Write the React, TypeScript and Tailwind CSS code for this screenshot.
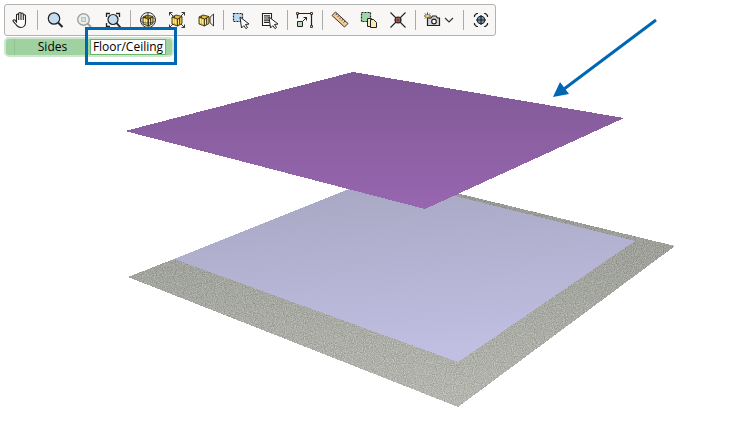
import type { ReactNode } from "react";

/** Shared 20x20 frame for the toolbar drawings. */
function Icon({ children, faded }: { children: ReactNode; faded?: boolean }) {
  return (
    <svg viewBox="0 0 20 20" className={faded ? "size-5 shrink-0 opacity-40" : "size-5 shrink-0"} fill="none" stroke="#222" aria-hidden="true">
      {children}
    </svg>
  );
}

function Tool({ label, disabled, children }: { label: string; disabled?: boolean; children: ReactNode }) {
  return (
    <button type="button" aria-label={label} title={label} disabled={disabled} className="grid h-[30px] w-[29px] shrink-0 place-items-center hover:bg-black/5">
      {children}
    </button>
  );
}

function Separator() {
  return <span className="mr-[2px] ml-[3px] h-5 w-px shrink-0 bg-[#aaaaaa]" />;
}

/** Yellow box model used by the three view tools. */
function Box() {
  return (
    <g stroke="#35301c" strokeWidth="0.9">
      <path d="M5 7 9 5l6 1.5v7L10.5 16 5 14z" fill="#e3bd45" />
      <path d="m5 7 5.5 2L15 6.5M10.5 9v7M7.5 6v2M12.5 8v6.500" />
      <path d="M6.5 9v4M8.5 9.5v4M11.5 10v4" stroke="#fff08e" strokeWidth="1.1" />
    </g>
  );
}

function Cursor() {
  return <path d="m9 7 9 7-3.5.5 2 3-1.5 1.2-2.2-3L10.5 18z" fill="#fff" />;
}

function Toolbar() {
  return (
    <div role="toolbar" aria-label="View tools" className="flex w-fit items-center rounded-[3px] border border-[#b2b2b2] bg-[#f8f7f6]">
      <Tool label="Pan">
        <Icon>
          <path d="M6.5 12V5.2a1.1 1.1 0 0 1 2.2 0V10 3.6a1.1 1.1 0 0 1 2.3 0V10 4.2a1.1 1.1 0 0 1 2.3 0V10 5.8a1.1 1.1 0 0 1 2.2 0v6.7c0 2.500-1.700 5-4.700 5-2.300 0-3.500-1-4.800-3l-2.800-3.200c-.8-1.200.8-2.100 1.800-1.100z" fill="#fff" strokeWidth="1.1" />
        </Icon>
      </Tool>
      <Separator />
      <Tool label="Zoom">
        <Icon>
          <circle cx="9" cy="8.5" r="5.7" fill="#c2dcf0" strokeWidth="1.2" />
          <path d="m13.2 12.7 4.3 4.3" strokeWidth="2" />
        </Icon>
      </Tool>
      <Tool label="Zoom selection" disabled>
        <Icon faded>
          <circle cx="9.5" cy="9.5" r="5.8" fill="#dde8ee" strokeWidth="1.4" />
          <path d="m13.5 13.5 3.5 3.5" strokeWidth="2" />
          <path d="M7.5 7.5h4v4h-4z" fill="#9ccb9c" stroke="#507050" />
        </Icon>
      </Tool>
      <Tool label="Zoom to fit">
        <Icon>
          <circle cx="10" cy="9.5" r="5" fill="#c2dcf0" strokeWidth="1.2" />
          <path d="m13.6 13.2 3.9 4.3" strokeWidth="1.8" />
          <path d="M3.5 7V3.5H7M13 3.5h3.5V7M3.5 13v3.5H7" strokeWidth="1.3" />
        </Icon>
      </Tool>
      <Separator />
      <Tool label="Orbit">
        <Icon>
          <Box />
          <circle cx="10" cy="10" r="7.5" strokeWidth="0.9" />
          <ellipse cx="10" cy="10" rx="7.5" ry="3" strokeWidth="0.6" />
          <path d="M10 2.5v15" strokeWidth="0.7" />
        </Icon>
      </Tool>
      <Tool label="Extents">
        <Icon>
          <Box />
          <path d="M2.5 5.5v-3h3m-3 0L6 6M14.5 2.5h3v3m0-3L14 6M2.5 14.5v3h3m-3 0L6 14M17.5 14.5v3h-3m3 0L14 14" strokeWidth="0.9" />
        </Icon>
      </Tool>
      <Tool label="Side view">
        <Icon>
          <g transform="translate(-2 0)">
            <Box />
          </g>
          <path d="M17.5 4v12L14 12.7V7.3z" fill="#eee" strokeWidth="0.9" />
        </Icon>
      </Tool>
      <Separator />
      <Tool label="Select area">
        <Icon>
          <path d="M2.5 3.5h9v8h-9z" fill="#bcd8ee" strokeWidth="1.2" strokeDasharray="2 1" />
          <Cursor />
        </Icon>
      </Tool>
      <Tool label="Select from list">
        <Icon>
          <path d="M2.5 3.5h9v12h-9z" fill="#fff" strokeWidth="1.1" />
          <path d="M4 5.8h6M4 8h6M4 10.2h5M4 12.4h5" strokeWidth="1.2" />
          <Cursor />
        </Icon>
      </Tool>
      <Separator />
      <Tool label="Scale">
        <Icon>
          <path d="M2.5 3.5h14v13M2.5 3.5v5" strokeWidth="1.2" />
          <path d="M2.5 11.5h5v5h-5z" fill="#b4dfbd" />
          <path d="m8 11 3.5-3.5M8.5 7.5h3v3" />
          <path d="M1.5 2.5h2v2h-2zM15.5 2.5h2v2h-2zM15.5 15.5h2v2h-2z" fill="#e8dc50" strokeWidth="0.8" />
        </Icon>
      </Tool>
      <Separator />
      <Tool label="Measure">
        <Icon>
          <path d="m2 5.5 3.5-3.5L18 13.5 14.5 17z" fill="#f4c996" strokeWidth="0.9" />
          <path d="M7.200 3.600 5.700 5.100M9.200 5.400 7.700 6.900M11.200 7.300 9.700 8.800M13.200 9.100l-1.500 1.500M15.200 11l-1.500 1.500" strokeWidth="0.9" />
        </Icon>
      </Tool>
      <Tool label="Copy and paste">
        <Icon>
          <path d="M2.5 2.5h9v9h-9z" fill="#9fd5ac" strokeWidth="1.2" strokeDasharray="2 1" />
          <path d="M8.5 8.5h4l2 2v6h-6z" fill="#f7e9b8" />
          <path d="M11.5 9.5h3l3 3v5h-6z" fill="#f7e9b8" />
        </Icon>
      </Tool>
      <Tool label="Clear marker">
        <Icon>
          <path d="m2.5 2.5 15 15m0-15-15 15" strokeWidth="1.1" />
          <circle cx="10" cy="10" r="3" fill="#c96856" strokeWidth="1.2" />
          <path d="M10 7v6M7 10h6" strokeWidth="0.6" />
        </Icon>
      </Tool>
      <Separator />
      <button type="button" aria-label="Camera" aria-haspopup="menu" className="flex h-[30px] w-[42px] items-center gap-[2px] pl-1 hover:bg-black/5">
        <Icon>
          <path d="M5.5 8H9l1.500-2h3.500l1.500 2h2v7.500h-12z" fill="#d4d4d4" strokeWidth="1.2" />
          <circle cx="12" cy="11.500" r="2.300" fill="#fff" strokeWidth="1.2" />
          <path d="M5.5 2.500v7M2 6h7M3 3.500l5 5m0-5-5 5" strokeWidth="0.9" />
          <circle cx="5.5" cy="6" r="1.6" fill="#f1cf65" stroke="none" />
        </Icon>
        <svg viewBox="0 0 10 10" className="size-[10px] shrink-0" fill="none" stroke="#333" strokeWidth="1.2" aria-hidden="true">
          <path d="m1 3 4 4 4-4" />
        </svg>
      </button>
      <Separator />
      <Tool label="Center view">
        <Icon>
          <path d="M3.5 7V5.500l2-2H7M13 3.500h1.500l2 2V7M3.500 13v1.500l2 2H7M13 16.500h1.500l2-2V13" strokeWidth="1.2" />
          <circle cx="10" cy="10" r="3.800" fill="#7195b2" strokeWidth="1.1" />
          <path d="M10 5v10M5 10h10" strokeWidth="1.1" />
        </Icon>
      </Tool>
    </div>
  );
}

function Tabs() {
  return (
    <div role="tablist" aria-label="Surfaces" className="mt-px flex h-5 w-fit items-stretch rounded-[5px] border-2 border-[#cde7cd] bg-[#a0d1a0] pr-1.5 pl-2 text-[12px] leading-4 text-black">
      <button type="button" role="tab" aria-selected="false" className="w-[76px] border-l border-[#8fc391]">
        Sides
      </button>
      <div className="relative flex">
        <button type="button" role="tab" aria-selected="true" className="w-[76px] border border-[#69b56e] bg-white leading-[14px]">
          Floor/Ceiling
        </button>
        {/* callout frame */}
        <span className="pointer-events-none absolute -top-3 -right-[11px] -bottom-[10px] -left-[5px] border-3 border-[#0068b3]" />
      </div>
    </div>
  );
}

/** Floor and ceiling planes of the model, with the pointer arrow. */
function Scene() {
  return (
    <svg viewBox="0 0 747 437" className="block h-auto w-full" role="img" aria-label="Floor and ceiling planes">
      <defs>
        <linearGradient id="ceiling" x1="0" y1="0" x2="0" y2="1">
          <stop offset="0" stopColor="#805996" />
          <stop offset="1" stopColor="#9766af" />
        </linearGradient>
        <linearGradient id="floor" x1="0" y1="0" x2="0.2" y2="1">
          <stop offset="0" stopColor="#a5a5c0" />
          <stop offset="1" stopColor="#c0bee1" />
        </linearGradient>
        <linearGradient id="ground" x1="0" y1="0" x2="0" y2="1">
          <stop offset="0" stopColor="#92938e" />
          <stop offset="1" stopColor="#b2b4ad" />
        </linearGradient>
        <filter id="gravel" x="0" y="0" width="1" height="1" colorInterpolationFilters="sRGB">
          <feTurbulence type="fractalNoise" baseFrequency="0.9" numOctaves="2" seed="4" />
          <feColorMatrix values="0.6 0 0 0 0.2  0.6 0 0 0 0.2  0.6 0 0 0 0.2  0 0 0 0 1" result="grain" />
          <feComposite in="SourceGraphic" in2="grain" operator="arithmetic" k2="1" k3="0.5" k4="-0.24" result="mix" />
          <feComposite in="mix" in2="SourceGraphic" operator="in" />
        </filter>
      </defs>
      <g shapeRendering="crispEdges">
        <path d="M128 277 386 176 675 246 458 407z" fill="url(#ground)" filter="url(#gravel)" />
        <path d="M174 259 379 177 635 241 458 362z" fill="url(#floor)" />
        <path d="M125 131 353 72 624 118 425 209z" fill="url(#ceiling)" />
      </g>
      <path d="M656 20 564 89" stroke="#0068b3" strokeWidth="3" />
      <path d="m553 97 7-15 9 12z" fill="#0068b3" />
    </svg>
  );
}

export default function App() {
  return (
    <main className="relative min-h-screen overflow-hidden bg-white font-['Open_Sans','Noto_Sans',sans-serif]">
      <Scene />
      <div className="absolute top-0 left-0 p-1">
        <Toolbar />
        <Tabs />
      </div>
    </main>
  );
}
